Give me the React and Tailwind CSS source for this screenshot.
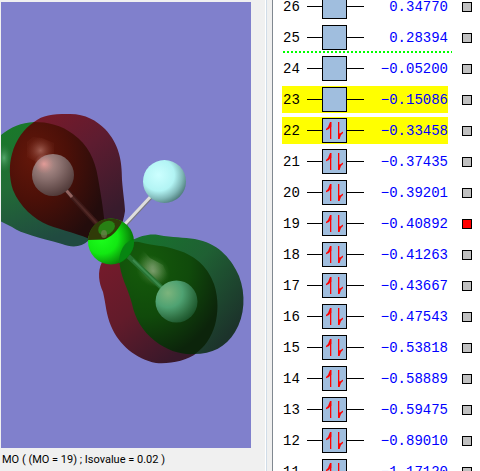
import { useState } from "react";
import clsx from "clsx";

const orbitals = [
  { id: 26, energy: "0.34770", electrons: 0 },
  { id: 25, energy: "0.28394", electrons: 0 },
  { id: 24, energy: "-0.05200", electrons: 0 },
  { id: 23, energy: "-0.15086", electrons: 0, highlight: true },
  { id: 22, energy: "-0.33458", electrons: 2, highlight: true },
  { id: 21, energy: "-0.37435", electrons: 2 },
  { id: 20, energy: "-0.39201", electrons: 2 },
  { id: 19, energy: "-0.40892", electrons: 2 },
  { id: 18, energy: "-0.41263", electrons: 2 },
  { id: 17, energy: "-0.43667", electrons: 2 },
  { id: 16, energy: "-0.47543", electrons: 2 },
  { id: 15, energy: "-0.53818", electrons: 2 },
  { id: 14, energy: "-0.58889", electrons: 2 },
  { id: 13, energy: "-0.59475", electrons: 2 },
  { id: 12, energy: "-0.89010", electrons: 2 },
  { id: 11, energy: "-1.17120", electrons: 2 },
];

const SpinPair = () => (
  <svg viewBox="0 0 23 23" className="size-full" fill="#ff0000">
    <path d="M7 3h1.300v17H7zM15 3h1.300v17H15z" />
    <path d="M8.300 3v5L7 8.500L6 10L3 11.200V10L5 8L7 3z" />
    <path d="M15 20v-6L17 14.500L20 12.500V14L18 16L16.500 20z" />
  </svg>
);

const OrbitalRow = ({ orbital, shown, onToggle }) => (
  <li className="relative flex h-[31px] items-center">
    <label
      className={clsx(
        "ml-[9px] flex h-[27px] w-[166px] items-center",
        orbital.highlight && "bg-[#ffff00]"
      )}
      htmlFor={`mo-${orbital.id}`}
    >
      <span className="w-[25px] pl-px text-black">{orbital.id}</span>
      <span className="h-px w-[15px] bg-black" />
      <span className="size-[25px] border border-black bg-[#a0bede]">
        {orbital.electrons === 2 && <SpinPair />}
      </span>
      <span className="h-px w-[17px] bg-black" />
      <span className="flex-1 text-right text-[#0000ff]">
        {orbital.energy.replace("-", "\u2212")}
      </span>
    </label>
    <input
      id={`mo-${orbital.id}`}
      type="checkbox"
      checked={shown}
      onChange={onToggle}
      className="ml-[14px] size-[10px] appearance-none border border-black bg-[#c0c0c0] checked:bg-[#ff0000]"
    />
    {orbital.id === 25 && (
      <span className="absolute bottom-0 left-[10px] h-[2px] w-[169px] bg-[repeating-linear-gradient(90deg,#00ff00_0_2px,transparent_2px_4px)]" />
    )}
  </li>
);

const Molecule = () => (
  <svg
    viewBox="1 2 250 446"
    preserveAspectRatio="xMidYMid slice"
    className="absolute inset-0 size-full"
    role="img"
    aria-label="Molecular orbital surface"
  >
    <defs>
      <linearGradient id="greenBack" x1="0" y1="0" x2="0.3" y2="1">
        <stop offset="0" stopColor="#187a28" />
        <stop offset="0.5" stopColor="#226c36" />
        <stop offset="1" stopColor="#204a40" />
      </linearGradient>
      <linearGradient id="redBack" x1="0.2" y1="0" x2="0.7" y2="0.9">
        <stop offset="0" stopColor="#741a2a" />
        <stop offset="0.4" stopColor="#5e1c30" />
        <stop offset="1" stopColor="#381b2c" />
      </linearGradient>
      <radialGradient id="redFront" cx="0.25" cy="0.3" r="0.8">
        <stop offset="0" stopColor="#64170a" />
        <stop offset="0.45" stopColor="#4b1008" />
        <stop offset="1" stopColor="#230c0c" />
      </radialGradient>
      <linearGradient id="greenOuter" x1="0" y1="0" x2="0.9" y2="0.8">
        <stop offset="0" stopColor="#16752b" />
        <stop offset="0.5" stopColor="#1f6033" />
        <stop offset="1" stopColor="#1c332b" />
      </linearGradient>
      <linearGradient id="redTail" x1="0" y1="0" x2="0.7" y2="1">
        <stop offset="0" stopColor="#761b2b" />
        <stop offset="0.5" stopColor="#621b2a" />
        <stop offset="1" stopColor="#38182a" />
      </linearGradient>
      <radialGradient id="greenFront" cx="0.25" cy="0.2" r="0.85">
        <stop offset="0" stopColor="#155b0b" />
        <stop offset="0.55" stopColor="#104a0b" />
        <stop offset="1" stopColor="#0c240b" />
      </radialGradient>
      <radialGradient id="pale" cx="0.36" cy="0.35" r="0.74">
        <stop offset="0" stopColor="#ccffff" />
        <stop offset="0.5" stopColor="#b2f4f4" />
        <stop offset="0.75" stopColor="#80b8b8" />
        <stop offset="1" stopColor="#416d6b" />
      </radialGradient>
      <radialGradient id="pinkish" cx="0.35" cy="0.25" r="0.85">
        <stop offset="0" stopColor="#b89490" />
        <stop offset="0.4" stopColor="#8a706e" />
        <stop offset="1" stopColor="#46302f" />
      </radialGradient>
      <radialGradient id="mint" cx="0.3" cy="0.3" r="0.76">
        <stop offset="0" stopColor="#7cb47c" />
        <stop offset="0.45" stopColor="#4fa272" />
        <stop offset="0.8" stopColor="#2f7043" />
        <stop offset="1" stopColor="#1d562c" />
      </radialGradient>
      <radialGradient id="center" cx="0.3" cy="0.42" r="0.7">
        <stop offset="0" stopColor="#1cff1c" />
        <stop offset="0.5" stopColor="#12e812" />
        <stop offset="1" stopColor="#067006" />
      </radialGradient>
      <radialGradient id="redShine">
        <stop offset="0" stopColor="#a8685c" stopOpacity="0.85" />
        <stop offset="1" stopColor="#7d3325" stopOpacity="0.15" />
      </radialGradient>
      <radialGradient id="atomShine">
        <stop offset="0" stopColor="#f0a09c" stopOpacity="0.8" />
        <stop offset="1" stopColor="#c07c78" stopOpacity="0" />
      </radialGradient>
      <radialGradient id="greenShine">
        <stop offset="0" stopColor="#7f9f70" stopOpacity="0.85" />
        <stop offset="1" stopColor="#3c7a30" stopOpacity="0" />
      </radialGradient>
      <radialGradient id="edgeShine">
        <stop offset="0" stopColor="#62b47a" stopOpacity="0.8" />
        <stop offset="1" stopColor="#328045" stopOpacity="0" />
      </radialGradient>
    </defs>

    {/* upper left lobes */}
    <path d="M0 136C10 127 21 123 34 122L60 150L105 240L88 241C82 247 72 248 62 244C38 237 22 234 12 227L0 221z" fill="url(#greenBack)" />
    <ellipse cx="4" cy="158" rx="8" ry="14" fill="url(#edgeShine)" />
    <path d="M34 122C43 115 52 114 67 114C84 113 96 120 105 129C119 144 122 160 122 180C123 193 125 205 125 211C124 218 122 224 119 234L104 235z" fill="url(#redBack)" />
    <path d="M34 122C48 122 61 125 73 134C88 145 95 159 98 178C101 195 103 207 105 226L92 240C82 235 62 230 48 225C34 219 20 207 13 190C9 178 9 164 12 154C16 139 24 129 34 122z" fill="url(#redFront)" />
    <path d="M27 142L33 137L42 138L54 143V155L40 164L27 157z" fill="url(#redShine)" />

    <path d="M66 190L101 228" stroke="#3c1917" strokeWidth="5" />
    <path d="M66 190L101 228" stroke="#502825" strokeWidth="2" />
    <path d="M66 190L72 197" stroke="#936460" strokeWidth="3" />
    <circle cx="53" cy="175" r="21" fill="url(#pinkish)" />
    <circle cx="44" cy="164" r="10" fill="url(#atomShine)" />

    {/* lower right lobes */}
    <path d="M102 262C97 272 99 283 103 292C106 305 106 314 111 326C119 345 136 359 156 363C171 364 186 361 197 353L170 335L145 300L119 259z" fill="url(#redTail)" />
    <path d="M130 241C144 234 153 233 164 236C177 238 188 237 199 240C220 245 232 260 239 276C246 294 245 316 235 332C226 347 212 354 194 354L175 300z" fill="url(#greenOuter)" />
    <path d="M119 258C118 248 128 240 139 242C153 246 164 245 177 250C198 256 209 270 214 284C219 299 218 314 215 325C211 338 205 347 195 354C181 355 168 351 155 341C142 331 135 318 132 304C128 287 120 278 119 258z" fill="url(#greenFront)" />
    <path d="M140 247L150 258L163 265L169 278L155 287L136 265z" fill="url(#greenShine)" />
    <ellipse cx="153" cy="271" rx="18" ry="15" transform="rotate(35 153 271)" fill="url(#greenShine)" />
    <path d="M127 255L162 288" stroke="#267130" strokeWidth="5" />
    <path d="M133 260L162 288" stroke="#3c8a4c" strokeWidth="2" />
    <circle cx="176.500" cy="301.500" r="21" fill="url(#mint)" />

    {/* bare bond and atom */}
    <path d="M125 225L152 196" stroke="#77777c" strokeWidth="4" />
    <path d="M125 224L152 195" stroke="#dedede" strokeWidth="3" />
    <circle cx="164.500" cy="181.500" r="21.500" fill="url(#pale)" />

    {/* central atom, partly behind both surfaces */}
    <circle cx="111" cy="241.500" r="23" fill="url(#center)" />
    <path d="M88 240C89 227 98 218 112 218.500C117 219 120 220 122 222C117 232 111 237 104 239.500z" fill="#303b08" />
    <ellipse cx="106.500" cy="228" rx="9" ry="6.500" transform="rotate(-32 106.500 228)" fill="#288014" />
    <ellipse cx="104" cy="234" rx="3" ry="4" fill="#718250" opacity="0.65" />
    <path d="M119 263C119 251 125 240 134 240C135 249 129 258 119 263z" fill="#078511" />
  </svg>
);

const App = () => {
  const [active, setActive] = useState(19);

  return (
    <main className="flex h-screen overflow-hidden bg-[#f0f0f0]">
      <section className="flex min-w-0 flex-1 flex-col pt-[2px] pl-px">
        <div className="relative mr-[14px] flex-1 overflow-hidden bg-[#8080cc]">
          <Molecule />
        </div>
        <p className="h-[23px] pl-px font-[Roboto,sans-serif] text-[11px] leading-[24px] whitespace-nowrap text-black">
          MO ( (MO = {active}) ; Isovalue = 0.02 )
        </p>
      </section>
      <div className="w-[7px] shrink-0 border-l border-white">
        <div className="h-full w-px bg-[#d0dce8]" />
      </div>
      <section className="w-52 shrink-0 overflow-hidden border-l border-[#808890] bg-white">
        <ul className="-mt-[9px] font-['Liberation_Mono',monospace] text-[14px] leading-[16px]">
          {orbitals.map((orbital) => (
            <OrbitalRow
              key={orbital.id}
              orbital={orbital}
              shown={active === orbital.id}
              onToggle={() => setActive(orbital.id)}
            />
          ))}
        </ul>
      </section>
    </main>
  );
};

export default App;
